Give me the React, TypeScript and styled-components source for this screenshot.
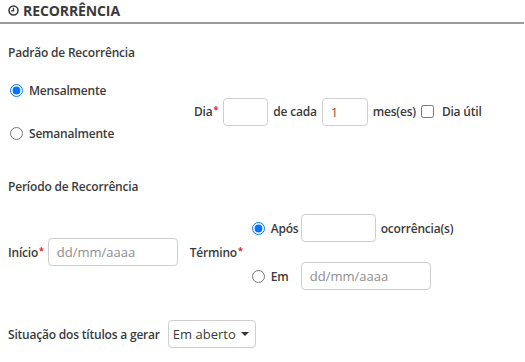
import React from "react";
import styled, { createGlobalStyle } from "styled-components";

const Global = createGlobalStyle`
  html, body { margin: 0; padding: 0; background: #fff; }
  body { font-family: "Open Sans", "Noto Sans", sans-serif; color: #3b3b3b; }
  * { box-sizing: border-box; }
`;

const Page = styled.div`
  width: 525px;
  height: 362px;
  overflow: hidden;
`;

const Header = styled.div`
  display: flex;
  align-items: center;
  gap: 4px;
  height: 24px;
  padding: 0 8px 1px;
  border-bottom: 2px solid #9a9a9a;
  margin-right: 1px;
`;

const Title = styled.span`
  font-size: 14px;
  font-weight: 700;
  letter-spacing: -0.1px;
  color: #3b3b3b;
`;

const Body = styled.div`
  padding: 0 8px;
`;

const SectionTitle = styled.div<{ $top: number }>`
  font-size: 12px;
  font-weight: 600;
  margin-top: ${(p) => p.$top}px;
  height: 18px;
  line-height: 18px;
  letter-spacing: -0.2px;
`;

const Label = styled.label<{ $w?: number }>`
  font-size: 12px;
  font-weight: 600;
  letter-spacing: -0.2px;
  white-space: nowrap;
  ${(p) => (p.$w ? `width: ${p.$w}px;` : "")}
`;

const Req = styled.span`
  color: #e0261c;
  font-weight: 700;
  vertical-align: 3px;
  font-size: 9px;
  margin-left: 1px;
`;

const PatternRow = styled.div`
  display: flex;
  align-items: center;
  margin-top: 14px;
`;

const RadioColumn = styled.div<{ $gap: number; $w?: number }>`
  display: flex;
  flex-direction: column;
  gap: ${(p) => p.$gap}px;
  ${(p) => (p.$w ? `width: ${p.$w}px;` : "")}
`;

const RadioLine = styled.div`
  display: flex;
  align-items: center;
  gap: 6px;
  height: 28px;
`;

const Radio = styled.input.attrs({ type: "radio" })`
  margin: 0 0 0 2px;
  width: 13px;
  height: 13px;
  accent-color: #0075ff;
`;

const Check = styled.input.attrs({ type: "checkbox" })`
  margin: 0;
  width: 13px;
  height: 13px;
`;

const Inline = styled.div<{ $gap?: number }>`
  display: flex;
  align-items: center;
  gap: ${(p) => p.$gap ?? 5}px;
`;

const TextInput = styled.input<{ $w: number }>`
  width: ${(p) => p.$w}px;
  height: 28px;
  border: 1px solid #cfcfcf;
  border-radius: 4px;
  padding: 0 8px;
  font-family: "Open Sans", "Noto Sans", sans-serif;
  font-size: 13px;
  color: #8e5030;
  outline: none;
  &::placeholder { color: #8e8e8e; }
`;

const PeriodRow = styled.div`
  display: flex;
  align-items: center;
  margin-top: 18px;
`;

const EndColumn = styled.div`
  display: flex;
  flex-direction: column;
  gap: 20px;
  margin-left: 7px;
`;

const Select = styled.div`
  display: flex;
  align-items: center;
  gap: 5px;
  height: 28px;
  padding: 0 6px 0 4px;
  border: 1px solid #cfcfcf;
  border-radius: 4px;
  font-size: 13px;
  color: #3b3b3b;
`;

const Caret = styled.span`
  width: 0;
  height: 0;
  border-left: 4px solid transparent;
  border-right: 4px solid transparent;
  border-top: 4px solid #333;
`;

const StatusRow = styled.div`
  display: flex;
  align-items: center;
  gap: 8px;
  margin-top: 30px;
`;

const ClockIcon = () => (
  <svg width="11" height="11" viewBox="0 0 10 10" fill="none">
    <circle cx="5" cy="5" r="4.1" stroke="#3b3b3b" strokeWidth="1.4" />
    <path d="M5 2.6V5.2H3" stroke="#3b3b3b" strokeWidth="1.2" />
  </svg>
);

export default function App() {
  return (
    <Page>
      <Global />
      <Header>
        <ClockIcon />
        <Title>RECORRÊNCIA</Title>
      </Header>
      <Body>
        <SectionTitle $top={20}>Padrão de Recorrência</SectionTitle>
        <PatternRow>
          <RadioColumn $gap={15} $w={186}>
            <RadioLine>
              <Radio name="p" defaultChecked />
              <Label>Mensalmente</Label>
            </RadioLine>
            <RadioLine>
              <Radio name="p" />
              <Label>Semanalmente</Label>
            </RadioLine>
          </RadioColumn>
          <Inline $gap={5}>
            <Label>
              Dia<Req>*</Req>
            </Label>
            <TextInput $w={45} />
            <Label>de cada</Label>
            <TextInput $w={46} defaultValue="1" />
            <Label>mes(es)</Label>
            <Check />
            <Label style={{ marginLeft: 3 }}>Dia útil</Label>
          </Inline>
        </PatternRow>
        <SectionTitle $top={31}>Período de Recorrência</SectionTitle>
        <PeriodRow>
          <Inline $gap={4}>
            <Label>
              Início<Req>*</Req>
            </Label>
            <TextInput $w={130} placeholder="dd/mm/aaaa" />
          </Inline>
          <Label style={{ marginLeft: 12 }}>
            Término<Req>*</Req>
          </Label>
          <EndColumn>
            <Inline $gap={5}>
              <RadioLine>
                <Radio name="t" defaultChecked />
                <Label $w={25}>Após</Label>
              </RadioLine>
              <TextInput $w={75} />
              <Label>ocorrência(s)</Label>
            </Inline>
            <Inline $gap={5}>
              <RadioLine>
                <Radio name="t" />
                <Label $w={25}>Em</Label>
              </RadioLine>
              <TextInput $w={130} placeholder="dd/mm/aaaa" />
            </Inline>
          </EndColumn>
        </PeriodRow>
        <StatusRow>
          <Label>Situação dos títulos a gerar</Label>
          <Select>
            Em aberto
            <Caret />
          </Select>
        </StatusRow>
      </Body>
    </Page>
  );
}
